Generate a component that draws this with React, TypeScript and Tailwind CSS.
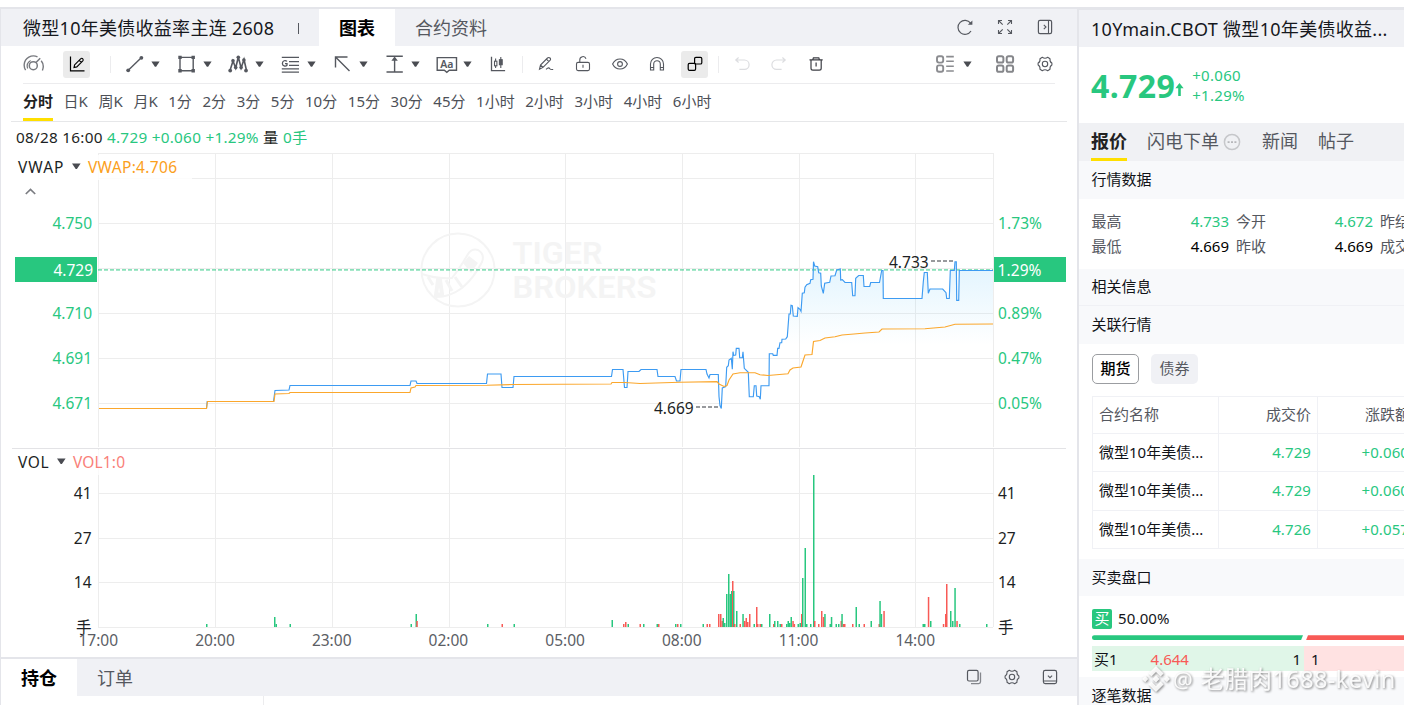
import React from "react";

const FONT = "font-['Noto_Sans','Noto_Sans_CJK_SC',sans-serif]";

/* ---------- icons ---------- */

type IconProps = { w?: number; className?: string; children: React.ReactNode };

function Ico({ w = 16, className = "", children }: IconProps) {
  return (
    <svg
      width={w}
      height={20}
      viewBox={`0 0 ${w} 20`}
      fill="none"
      stroke="currentColor"
      strokeWidth={1.1}
      className={`shrink-0 ${className}`}
    >
      {children}
    </svg>
  );
}

const Caret = ({ className = "" }: { className?: string }) => (
  <svg width="9" height="20" viewBox="0 0 9 20" className={`shrink-0 ${className}`}>
    <path d="M0.4 7.6h8.2L5.1 12.800h-1.200z" fill="#4a4c52" />
  </svg>
);

const Divider = ({ className = "" }: { className?: string }) => (
  <span className={`h-[17px] w-px shrink-0 bg-[#ececee] ${className}`} />
);

const Gear = ({ className = "" }: { className?: string }) => (
  <Ico className={className}>
    <path
      d="M5.300 3.300Q8 5.300 10.700 3.300L13 4.700Q12.600 8 14.900 9.100V10.900Q12.600 12 13 15.300L10.700 16.700Q8 14.700 5.300 16.700L3 15.300Q3.400 12 1.100 10.900V9.100Q3.400 8 3 4.700Z"
      strokeLinejoin="round"
    />
    <circle cx="8" cy="10" r="2.700" />
  </Ico>
);

const Gauge = () => (
  <Ico w={22} className="text-[#77797e]">
    <path d="M2.600 16.200A9.500 9.500 0 0 1 1.200 10.500a9.300 9.300 0 0 1 13.300-7.600M18.200 6.800c2.400 3 2.600 6.300 1.200 9.600" strokeWidth="1.400" />
    <path d="M4.600 14.500a6.800 6.800 0 0 1 3-8" strokeWidth="1.200" />
    <circle cx="10.300" cy="11.700" r="4" strokeWidth="1.500" />
    <path d="M13 8.600l4.200-4.400" strokeWidth="1.500" />
  </Ico>
);

/* ---------- left header ---------- */

function ChartHeader() {
  return (
    <div className="flex h-[37px] items-stretch bg-[#f0f1f5]">
      <div className="flex w-[318px] items-center pl-[22px] pt-[2px] text-[18px] tracking-[0.28px] text-[#16181d]">
        <span className="whitespace-pre">微型10年美债收益率主连 2608</span>
        <span className="ml-[24px] h-[11px] w-px bg-[#55585f]" />
      </div>
      <div className="flex w-[76px] items-center justify-center bg-white pt-[2px] text-[18px] font-bold text-black">图表</div>
      <div className="flex items-center pl-5 pt-[2px] text-[18px] text-[#55585f]">合约资料</div>
      <div className="ml-auto flex items-center pb-[2px] pr-[24px] text-[#55585f]">
        <Ico w={18}>
          <path d="M14.6 6.2A7 7 0 1 0 15 14" strokeWidth="1.2" />
          <path d="M16.4 3.6v4.2h-4.6z" fill="currentColor" stroke="none" />
        </Ico>
        <Ico className="ml-[23px]">
          <path d="M1.5 7V3.5H5M1.5 3.5l4.2 4.2M11 3.5h3.5V7M14.5 3.5l-4.2 4.2M1.5 13v3.5H5M1.5 16.5l4.2-4.2M14.5 13v3.5H11M14.5 16.5l-4.2-4.2" />
        </Ico>
        <Ico className="ml-[24px]">
          <rect x="1.4" y="3.4" width="13.2" height="13.2" rx="1.6" strokeWidth="1.2" />
          <path d="M11.5 3.5v13M6.8 7.8L9 10l-2.2 2.2" />
        </Ico>
      </div>
    </div>
  );
}

/* ---------- toolbar ---------- */

function Toolbar() {
  return (
    <div className="mx-[22px] flex h-[38px] w-[1032px] items-center border-b border-[#ececee] pb-px text-[#55585f]">
      <Gauge />
      <span className="ml-[18px] flex size-[27px] shrink-0 items-center justify-center rounded-[3px] bg-[#ebebeb] text-black">
        <Ico>
          <path d="M1.5 2.6v14.3h14" strokeWidth="1.2" />
          <path d="M5.6 10.8l6-6c.8-.7 1.6-.7 2.2 0s.6 1.4 0 2.1l-6 6-2.8.7zM10.2 6.3l2.1 2.1" />
        </Ico>
      </span>
      <Divider className="ml-[20px]" />
      <Ico w={18} className="ml-[15px]">
        <path d="M2 16.5L15.5 3.5" strokeWidth="1.4" />
        <circle cx="2.2" cy="16.3" r="1.9" fill="currentColor" stroke="none" />
        <circle cx="15.4" cy="3.8" r="1.9" fill="currentColor" stroke="none" />
      </Ico>
      <Caret className="ml-[7px]" />
      <Ico w={19} className="ml-[17px]">
        <path d="M3 3v14.2M16.2 3v14.2M2 3.4h15M2 16.8h15" strokeWidth="1.4" />
        <path d="M1.3 1.7h3.4v3.4H1.3zM14.5 1.7h3.4v3.4h-3.4zM1.3 15.1h3.4v3.4H1.3zM14.5 15.1h3.4v3.4h-3.4z" fill="currentColor" stroke="none" />
      </Ico>
      <Caret className="ml-[7px]" />
      <Ico w={20} className="ml-[16px]">
        <path d="M2 16.5L5 7l2.7 7L10.3 3l2.8 11L16 5.500l2.500 11" strokeWidth="1.600" />
        <g fill="currentColor" stroke="none">
          <circle cx="2.2" cy="16.6" r="1.9" />
          <circle cx="5" cy="6.7" r="1.8" />
          <circle cx="7.7" cy="13.6" r="1.8" />
          <circle cx="10.3" cy="3.2" r="1.8" />
          <circle cx="13.1" cy="13.6" r="1.8" />
          <circle cx="15.9" cy="6" r="1.8" />
          <circle cx="18" cy="16.6" r="1.9" />
        </g>
      </Ico>
      <Caret className="ml-[7px]" />
      <Ico w={19} className="ml-[17px]">
        <path d="M.8 3.4h17.2M8 7.6h10M8 11.3h10M.8 14.8h17.2M.8 18.2h17.2" strokeWidth="1.3" />
        <path d="M6 7.4c-1.5-1.5-4.6-.9-4.6 2 0 2.7 3.2 3.3 4.6 1.8V9.6H4" strokeWidth="1.3" />
      </Ico>
      <Caret className="ml-[7px]" />
      <Ico w={18} className="ml-[17px]">
        <path d="M2.5 13.5V3h12M2.5 3l14 14" strokeWidth="1.4" />
      </Ico>
      <Caret className="ml-[8px]" />
      <Ico w={19} className="ml-[17px]">
        <path d="M1.5 2.3h16.3M1.5 18h16.3M9.6 4v14" strokeWidth="1.4" />
        <path d="M9.6 2.6l3.2 4.2H6.4z" fill="currentColor" stroke="none" />
      </Ico>
      <Caret className="ml-[7px]" />
      <Ico w={22} className="ml-[16px]">
        <path d="M1.2 3.6h19.3v12.7h-7.2l-2.5 2-2.5-2H1.2z" strokeWidth="1.4" />
        <text x="10.9" y="14" textAnchor="middle" fontSize="10.500" fontWeight="600" fill="currentColor" stroke="none" fontFamily="Noto Sans">Aa</text>
      </Ico>
      <Caret className="ml-[5px]" />
      <Ico className="ml-[18px]">
        <path d="M1.5 2.8v13.8h13.6" strokeWidth="1.3" />
        <path d="M5.6 4.5V14M10.8 3v11" />
        <rect x="4.5" y="7.2" width="2.4" height="4.6" fill="white" />
        <rect x="9.4" y="5.7" width="2.8" height="5" fill="currentColor" />
      </Ico>
      <Divider className="ml-[16px]" />
      <Ico className="ml-[15px]">
        <path d="M1.5 15.2l1-4.2 7-7c.8-.8 1.8-.7 2.5 0s.8 1.6 0 2.4l-7 7-3.5 1.8zM8.4 5.1l2.5 2.5M2.5 11l2.5 2.4M8 15.3c2.4-2 3.2-1.6 3.8-.6.5.8 1.6 1 3.4.8" />
      </Ico>
      <Ico className="ml-[21px]">
        <rect x="1.5" y="8.4" width="13" height="8.2" rx="1.6" />
        <path d="M4.8 8.2V6a3.2 3.2 0 0 1 6.2-1.3M8 10.8v3" />
      </Ico>
      <Ico w={18} className="ml-[20px]">
        <path d="M1.6 10C3.3 6.500 6 5 9 5s5.700 1.500 7.400 5c-1.700 3.500-4.400 5-7.400 5s-5.700-1.500-7.400-5z" />
        <circle cx="9" cy="10" r="2.400" />
      </Ico>
      <Ico className="ml-[20px]">
        <path d="M1.500 16V10a6.500 6.500 0 0 1 13 0v6h-3.200v-6a3.300 3.300 0 0 0-6.600 0v6zM1.500 13.500h3.200M11.300 13.500h3.200" />
      </Ico>
      <span className="ml-[16px] flex size-[27px] shrink-0 items-center justify-center rounded-[3px] bg-[#ebebeb] text-black">
        <Ico>
          <rect x="1.200" y="9.400" width="7.400" height="7" rx="1.300" strokeWidth="1.200" />
          <rect x="7.600" y="3.400" width="7.200" height="6.600" rx="1.300" strokeWidth="1.200" />
        </Ico>
      </span>
      <Divider className="ml-[10px]" />
      <Ico className="ml-[15px] text-[#dcdde0]">
        <path d="M4.600 3.500L1.800 6l2.800 2.500M1.800 6h8.600a4.200 4.200 0 0 1 0 9.400H5.400" strokeWidth="1.200" />
      </Ico>
      <Ico className="ml-[21px] text-[#dcdde0]">
        <path d="M11.400 3.500L14.200 6l-2.800 2.500M14.200 6H5.600a4.200 4.200 0 0 0 0 9.400h5" strokeWidth="1.200" />
      </Ico>
      <Ico className="ml-[21px] text-[#3c3e44]">
        <path d="M1.500 5.800h13.200M4.800 5.600l.6-1.700h5.400l.6 1.700M3 6v8.200c0 1.300.7 1.900 1.900 1.900h6.400c1.200 0 1.900-.6 1.900-1.900V6M8.100 8.600v4" strokeWidth="1.200" />
      </Ico>
      <Ico w={20} className="ml-[111px] text-[#8b8c90]">
        <rect x="2" y="2.200" width="6.200" height="6.400" rx="2" strokeWidth="1.900" />
        <rect x="2" y="11.400" width="6.200" height="6.400" rx="2" strokeWidth="1.900" />
        <path d="M11.200 2.600h7.600M11.200 7.200h7.600M11.200 12.200h7.600M11.200 17h7.600" strokeWidth="1.600" />
      </Ico>
      <Caret className="ml-[8px]" />
      <Ico w={20} className="ml-[23px] text-[#85868a]">
        <rect x="2" y="2.200" width="6.400" height="6.400" rx="1.900" strokeWidth="2" />
        <rect x="11.700" y="2.200" width="6.400" height="6.400" rx="1.900" strokeWidth="2" />
        <rect x="2" y="11.400" width="6.400" height="6.400" rx="1.900" strokeWidth="2" />
        <rect x="11.700" y="11.400" width="6.400" height="6.400" rx="1.900" strokeWidth="2" />
      </Ico>
      <Gear className="ml-[22px]" />
    </div>
  );
}

const PERIODS = ["日K", "周K", "月K", "1分", "2分", "3分", "5分", "10分", "15分", "30分", "45分", "1小时", "2小时", "3小时", "4小时", "6小时"];

function Periods() {
  return (
    <div className="mx-[10px] flex h-[38px] items-stretch gap-[10.6px] border-b border-[#e6e7e9] pl-[12px] text-[15px] text-[#4d5057]">
      <span className="flex items-center border-b-[3px] border-[#ffdf00] pt-px font-bold text-[#222]">分时</span>
      {PERIODS.map((p) => (
        <span key={p} className="flex items-center whitespace-nowrap pb-[2px]">{p}</span>
      ))}
    </div>
  );
}

/* ---------- chart ---------- */

const PRICE: number[][] = [
  [99,408.500],[206.500,408.500],[207.200,401.500],[273.500,401.500],[275,390.500],[289,390],[290,385.500],[410,385.500],[411,381],[416,381],[417,383.500],
  [486.500,383.500],[487.500,374],[501,374],[502,387.500],[513,387.500],[514,376.500],[611.500,376.500],[612.500,369.500],[623,369.500],[624.500,387.500],
  [627,387.500],[628,371.500],[639,371.500],[641,369.500],[657,369.500],[658,376.500],[675,376.500],[676.500,381],[680,381],[681,369.500],[706,369.500],
  [707,374],[709,378],[710,374.500],[718.300,374.500],[719,396.500],[720,405.500],[721.300,408.500],[722.300,388],[725.700,386.700],[726.700,367.300],
  [728.300,365.700],[729,360],[731.300,358.300],[732.300,369.300],[733,351.700],[733.700,355.300],[735.700,355],[736.300,348.300],[739,348.300],
  [739.700,357.700],[742.300,357.700],[743,351.700],[743.700,360.700],[744.300,368.300],[748.300,372.300],[749.300,396.700],[753.300,396.700],
  [754.300,385.700],[756,385.700],[756.700,396],[759.300,396.700],[760.300,399.300],[761,385.700],[769,385.700],[769.300,353.700],[772.700,353.700],
  [773.300,355.300],[777,355.300],[777.700,348.300],[779,348.300],[780,342.700],[781.700,342.700],[782,339.300],[785.700,339],[787.300,336.700],
  [789,314],[790.300,314],[791,305.300],[792.300,305.700],[793.300,316],[797.300,316.300],[798,307.700],[800,309.300],[801,311.300],[802.300,293.300],
  [804.300,292.700],[805,287.300],[806.700,284.700],[810,283.300],[810.700,279.700],[813,279.300],[813.500,261.700],[814.700,266],[817.700,266.700],
  [818.700,272.700],[820.700,273.300],[821.300,286],[823.300,293.300],[824.700,283.300],[829.700,282.300],[831,276],[835,275.700],[836.700,270],
  [840.300,269],[840.700,280],[842.300,279.700],[845,282.500],[851.700,282.500],[852.700,295.700],[855,295.700],[855.700,278.300],[858.700,275.500],
  [863.300,275.500],[864,286.500],[869.700,286.500],[870.700,282.500],[879.500,282.500],[881.700,270.500],[883,270.500],[883.300,298.500],[922,298.500],
  [923.300,281.700],[924.300,272.500],[927.300,272.500],[928.300,293.300],[930,289],[942.700,289],[946,292.700],[946.700,298.500],[949.300,298.500],
  [950.300,270.500],[954.300,270.500],[955,261.700],[956.300,261.700],[956.700,300.300],[958.700,300.300],[959.300,270.500],[993,270.500],
];

const VWAP: number[][] = [
  [99,408.500],[206.500,408.500],[207.500,401.500],[274,401.500],[275,394],[289,393.500],[290,392.500],[410,392.500],[411,388],[415,387],[416,385.500],
  [487,385.300],[513,384.500],[611,384],[612,382.500],[625,382.500],[640,383.500],[680,382.300],[717,381.700],[719,384],[724,386.500],[727,385.500],
  [729,380],[733,374],[740,372.700],[755,372.700],[760,374.700],[768,375.500],[788,373.700],[790,370],[793,368],[801,367],[803,361],[805,355],
  [812,354.500],[813.500,341.500],[820,340.500],[825,338],[835,336.700],[842,335],[854,334],[865,333],[879,332],[882,329],[925,328.700],
  [945,327],[955,324.300],[993,324],
];

/* [x, height, isDown] */
const VOLUME: [number, number, number][] = [
  [206,3,0],[274,10,0],[275.500,3,0],[289.500,3,0],[410.500,3,0],[415.500,13,0],[416.300,6,1],[487,3,0],[501.500,3,1],[513.500,3,0],
  [611.500,7,0],[623,3,1],[625,5,1],[627.500,3,0],[639.500,3,1],[643,3,0],[656.500,3,0],[658,3,1],[675,3,0],[677,3,1],[680,3,0],
  [702.500,3,0],[706.500,3,1],[709,3,1],[718,13,1],[720,13,1],[721.500,6,1],[722.500,9,0],[724,4,0],[726,33,0],[728,53,0],[729.500,33,0],
  [731,36,0],[732,46,1],[733,36,0],[734,3,1],[736,16,0],[739.500,3,1],[742.300,13,0],[744,6,1],[745.500,9,1],[747,5,1],[749,13,1],[753.500,3,0],
  [756,20,1],[757,3,1],[759.500,3,1],[761,3,0],[769,13,0],[773,3,1],[774,6,0],[777,6,0],[779.500,3,0],[781,3,1],[786,3,0],[787.500,6,0],
  [789,4,0],[790.500,10,0],[792.300,6,1],[793.600,3,1],[797.500,3,0],[799.500,4,0],[801,13,1],[802,49,0],[804.500,79,0],[806,3,0],[810,3,0],
  [813,152,0],[814,6,1],[818,3,1],[821,16,1],[822.800,10,1],[824.200,13,0],[829.500,3,0],[830.800,10,0],[835.500,3,0],[838,3,0],[840.500,6,1],
  [841.300,13,0],[842.800,3,1],[844,3,1],[852,3,1],[855.500,20,0],[858.500,3,0],[863.500,3,1],[870.500,6,0],[878.500,3,1],[879.300,26,0],
  [880.700,13,0],[883.300,16,1],[922.500,3,0],[924,3,0],[927.800,30,1],[930,6,0],[942.800,3,1],[945,13,1],[946,43,1],[950,16,0],
  [952,6,0],[954.300,39,0],[956.300,6,1],[959,3,0],[986,3,0],
];

const GRID_X = [215.500, 332.500, 449.500, 565.500, 682.500, 799.500, 915.500];
const toPath = (pts: number[][]) => "M" + pts.map((p) => p.join(" ")).join("L");

const PRICE_AXIS = [
  { y: 229, l: "4.750", r: "1.73%" },
  { y: 319, l: "4.710", r: "0.89%" },
  { y: 364, l: "4.691", r: "0.47%" },
  { y: 409, l: "4.671", r: "0.05%" },
];
const VOL_AXIS = [
  { y: 499, l: "41" },
  { y: 544, l: "27" },
  { y: 588, l: "14" },
  { y: 633, l: "手" },
];
const TIMES = ["17:00", "20:00", "23:00", "02:00", "05:00", "08:00", "11:00", "14:00"];

function Chart() {
  return (
    <svg width="1076" height="504" viewBox="1 153 1076 504" className="block" fontSize="15.5">
      <defs>
        <linearGradient id="area" x1="0" y1="261" x2="0" y2="345" gradientUnits="userSpaceOnUse">
          <stop offset="0" stopColor="#29aef5" stopOpacity="0.14" />
          <stop offset="1" stopColor="#29aef5" stopOpacity="0" />
        </linearGradient>
      </defs>

      <g stroke="#ededed" shapeRendering="crispEdges">
        {[153.500, 178.500, 223.500, 268.500, 313.500, 358.500, 403.500, 493.500, 538.500, 582.500, 627.500].map((y) => (
          <path key={y} d={`M98 ${y}H993`} />
        ))}
        {[98.500, ...GRID_X, 993.500].map((x) => (
          <path key={x} d={`M${x} 153V447M${x} 449V627`} />
        ))}
      </g>
      <path d="M12 448.500H1066" stroke="#e3e3e6" shapeRendering="crispEdges" />
      <rect x="14" y="155" width="178" height="25" fill="#fff" fillOpacity="0.8" />
      <rect x="14" y="450" width="115" height="25" fill="#fff" fillOpacity="0.7" />

      <g fill="none" stroke="#f4f4f4" strokeWidth="2">
        <circle cx="458" cy="270" r="36.500" />
        <path d="M422 274Q436 279 452 278Q460 268 468 254Q472 248 478 250Q485 254 482 262Q474 278 462 288Q450 297 436 297" />
        <path d="M463 263L471 273L478 263L469 256Z" fill="#f4f4f4" stroke="none" />
        <path d="M438 280L436 295L442 294L440 280Z" strokeWidth="4" />
        <path d="M428 277L433 285M446 280L452 291M455 277L462 287" strokeWidth="3" />
      </g>
      <g fontFamily="Roboto" fontWeight="600" fontSize="31.500" fill="#f4f4f4">
        <text x="512.500" y="264" textLength="90" lengthAdjust="spacingAndGlyphs">TIGER</text>
        <text x="512.500" y="298" textLength="144" lengthAdjust="spacingAndGlyphs">BROKERS</text>
      </g>

      <path d={toPath(PRICE) + "V403L99 403Z"} fill="url(#area)" />
      <path d="M98 269.900H993" stroke="#28c77f" strokeOpacity="0.55" strokeWidth="1.700" strokeDasharray="4 2" />
      <path d={toPath(PRICE)} fill="none" stroke="#3d9bf2" strokeWidth="1.150" />
      <path d={toPath(VWAP)} fill="none" stroke="#fba72c" strokeWidth="1.150" />

      {VOLUME.map(([x, h, d], i) => (
        <rect key={i} x={x} y={627 - h} width="1.500" height={h} fill={d ? "#f85a56" : "#28c77f"} />
      ))}

      <g fill="#28c77f">
        {PRICE_AXIS.map((a) => (
          <React.Fragment key={a.l}>
            <text x="92" y={a.y} textAnchor="end">{a.l}</text>
            <text x="998" y={a.y} textLength="44" lengthAdjust="spacing">{a.r}</text>
          </React.Fragment>
        ))}
        <rect x="15" y="257" width="82" height="25" />
        <rect x="994" y="257" width="72" height="25" />
      </g>
      <text x="93" y="276" textAnchor="end" fill="#fff">4.729</text>
      <text x="997.500" y="276" fill="#fff" textLength="44" lengthAdjust="spacing">1.29%</text>
      <g fill="#1d1f24">
        {VOL_AXIS.map((a) => (
          <React.Fragment key={a.l}>
            <text x="91.500" y={a.y} textAnchor="end">{a.l}</text>
            <text x="998" y={a.y}>{a.l}</text>
          </React.Fragment>
        ))}
        <text x="18" y="173" textLength="45.500" lengthAdjust="spacing">VWAP</text>
        <text x="18" y="468" textLength="30.500" lengthAdjust="spacing">VOL</text>
        <text x="889" y="268">4.733</text>
        <text x="654" y="414">4.669</text>
      </g>
      <path d="M931 261H955M696 407H720" stroke="#77797e" strokeWidth="1.600" strokeDasharray="4 2" />
      <path d="M72 163.500h8.600l-3.700 5.400h-1.200zM57 458.500h8.600l-3.700 5.400h-1.200z" fill="#4a4c52" />
      <text x="88" y="173" fill="#fba01c" textLength="89" lengthAdjust="spacing">VWAP:4.706</text>
      <text x="73" y="468" fill="#f97f79" textLength="52" lengthAdjust="spacing">VOL1:0</text>
      <path d="M25.800 194L30.500 189.500L35.200 194" fill="none" stroke="#7b7d82" strokeWidth="1.700" />
      <g fill="#5b5e65" textAnchor="middle">
        {TIMES.map((t, i) => (
          <text key={t} x={98.300 + i * 116.700} y="646">{t}</text>
        ))}
      </g>
    </svg>
  );
}

function BottomTabs() {
  return (
    <div className="flex h-[48px] shrink-0 flex-col">
      <div className="flex h-[39px] items-stretch border-t-2 border-[#e4e5ea] bg-[#f0f1f5]">
        <div className="flex w-[76px] items-center justify-center bg-white pt-px text-[18px] font-bold text-black">持仓</div>
        <div className="flex items-center pl-5 pt-[2px] text-[18px] text-[#55585f]">订单</div>
        <div className="ml-auto flex items-center gap-[22px] pb-px pr-[19px] text-[#55585f]">
          <Ico>
            <rect x="1.500" y="3.400" width="10.600" height="10.600" rx="1.500" strokeWidth="1.200" />
            <path d="M14.500 5.500v9.300c0 1.200-.6 1.800-1.800 1.800H5" strokeWidth="1.300" strokeOpacity="0.700" />
          </Ico>
          <Gear />
          <Ico>
            <rect x="1.400" y="3.400" width="13.200" height="13.200" rx="1.800" strokeWidth="1.200" />
            <path d="M1.500 14h13M5.900 8.600L8 10.700l2.100-2.100" />
          </Ico>
        </div>
      </div>
      <div className="h-[9px] w-[263px] border-r border-[#ececee] bg-white" />
    </div>
  );
}

/* ---------- right panel ---------- */

const Section = ({ title, className }: { title: string; className: string }) => (
  <div className={`flex shrink-0 items-center bg-[#f8f9fb] pb-px pl-[12.5px] text-[15px] text-[#111318] ${className}`}>{title}</div>
);

const LINKED = [
  ["4.729", "+0.060"],
  ["4.729", "+0.060"],
  ["4.726", "+0.057"],
];

function QuotePanel() {
  return (
    <aside className="flex w-[325px] shrink-0 flex-col overflow-hidden">
      <div className="flex h-[37px] shrink-0 items-center whitespace-nowrap bg-[#f0f1f5] pl-[12px] pt-[2px] text-[18px] tracking-[0.3px] text-[#16181d]">
        10Ymain.CBOT 微型10年美债收益...
      </div>
      <div className="flex h-[76px] shrink-0 items-center bg-white pl-[12px] text-[#28c77f]">
        <span className="mt-px text-[32px] font-bold leading-none tracking-[0.4px]">4.729</span>
        <svg width="9" height="14" viewBox="0 0 9 14" className="mt-[9px]">
          <path d="M4.500 0L8.600 5.200H5.800V13H3.200V5.200H.4z" fill="#28c77f" />
        </svg>
        <span className="ml-[8px] flex flex-col pb-px text-[15px] leading-[20px] tracking-[0.3px]">
          <span>+0.060</span>
          <span>+1.29%</span>
        </span>
      </div>
      <div className="flex h-[38px] shrink-0 items-stretch bg-[#f0f1f4] pl-[12px] text-[18px] text-[#55585f]">
        <span className="flex items-center border-b-[3px] border-[#ffdf00] pt-[2px] font-bold text-[#222]">报价</span>
        <span className="ml-[20px] flex items-center pb-px">
          闪电下单
          <svg width="18" height="18" viewBox="0 0 18 18" className="ml-[4px]">
            <circle cx="9" cy="9" r="7.600" fill="none" stroke="#c6c7ca" strokeWidth="1.500" />
            <path d="M4.600 8.200h2v1.800h-2zM8 8.200h2v1.800H8zM11.400 8.200h2v1.800h-2z" fill="#b6b7ba" />
          </svg>
        </span>
        <span className="ml-[21px] flex items-center pb-px">新闻</span>
        <span className="ml-[20px] flex items-center pb-px">帖子</span>
      </div>
      <Section title="行情数据" className="h-[38px]" />
      <div className="grid h-[70px] w-[430px] shrink-0 grid-cols-[137.5px_7px_137px_7px_120px] content-center gap-y-[1px] pb-[2px] pl-[12.5px] text-[15px] leading-[24px] text-[#55585f]">
        <div className="flex justify-between"><span>最高</span><span className="text-[#28c77f]">4.733</span></div>
        <span />
        <div className="flex justify-between"><span>今开</span><span className="text-[#28c77f]">4.672</span></div>
        <span />
        <div>昨结</div>
        <div className="flex justify-between"><span>最低</span><span className="text-black">4.669</span></div>
        <span />
        <div className="flex justify-between"><span>昨收</span><span className="text-black">4.669</span></div>
        <span />
        <div>成交量</div>
      </div>
      <Section title="相关信息" className="h-[37px] border-b border-[#f0f1f5]" />
      <Section title="关联行情" className="h-[38px]" />
      <div className="flex h-[52px] shrink-0 gap-[12px] pl-[13px] pt-[10px] text-[15px]">
        <span className="flex h-[30px] w-[47px] items-center justify-center rounded-[5px] border border-[#9b9da1] pb-[2px] font-medium text-black">期货</span>
        <span className="flex h-[30px] w-[47px] items-center justify-center rounded-[5px] bg-[#f0f1f5] pb-px text-[#55585f]">债券</span>
      </div>
      <div className="ml-[13px] w-[360px] shrink-0 border-l border-t border-[#f0f1f5] text-[15px]">
        <div className="grid h-[37px] grid-cols-[126px_99px_134px] border-b border-[#f0f1f5] text-[#55585f]">
          <span className="flex items-center border-r border-[#f0f1f5] pb-px pl-[6px]">合约名称</span>
          <span className="flex items-center justify-end border-r border-[#f0f1f5] pb-px pr-[6px]">成交价</span>
          <span className="flex items-center pb-px pl-[47px]">涨跌额</span>
        </div>
        {LINKED.map(([price, change], i) => (
          <div key={i} className="grid h-[38.400px] grid-cols-[126px_99px_134px] border-b border-[#f0f1f5] text-[#28c77f]">
            <span className="flex items-center border-r border-[#f0f1f5] pb-px pl-[6px] text-[#111318]">微型10年美债...</span>
            <span className="flex items-center justify-end border-r border-[#f0f1f5] pb-px pr-[6px] tracking-[0.1px]">{price}</span>
            <span className="flex items-center pb-px pl-[43.500px] tracking-[0.1px]">{change}</span>
          </div>
        ))}
      </div>
      <Section title="买卖盘口" className="mt-[10px] h-[37px]" />
      <div className="flex h-[39px] shrink-0 items-center pl-[13px] pt-[7px] text-[15px] text-[#111318]">
        <span className="mr-[6px] flex size-[20px] items-center justify-center rounded-[2px] bg-[#28c77f] pb-px leading-none text-white">买</span>
        <span className="pb-px tracking-[0.15px]">50.00%</span>
      </div>
      <div className="ml-[13px] flex h-[5px] w-[422px] shrink-0 gap-[2px]">
        <span className="w-[211px] rounded-l-full bg-[#28c77f] [clip-path:polygon(0_0,100%_0,calc(100%-2px)_100%,0_100%)]" />
        <span className="w-[209px] bg-[#f85a56] [clip-path:polygon(3px_0,100%_0,100%_100%,1px_100%)]" />
      </div>
      <div className="ml-[13px] mt-[6px] flex h-[25px] w-[420px] shrink-0 text-[15px] leading-[20px] text-[#111318]">
        <div className="flex w-[212px] items-center bg-[#e0f6e8] pl-[2px]">
          <span>买1</span>
          <span className="ml-[33px] pt-px text-[#f85a56]">4.644</span>
          <span className="ml-auto pr-[3px] pt-px">1</span>
        </div>
        <div className="flex flex-1 items-center bg-[#ffe2e2] pl-[7px] pt-px">1</div>
      </div>
      <Section title="逐笔数据" className="mt-[6px] h-[38px]" />
    </aside>
  );
}

function Watermark() {
  return (
    <div className="absolute left-[1141px] top-[662px] flex items-center whitespace-nowrap text-[23.500px] leading-[34px] text-white/90 [filter:drop-shadow(1px_1px_1px_rgba(0,0,0,0.5))]">
      <svg width="30" height="30" viewBox="0 0 30 30" fill="currentColor">
        <path d="M15 2l7.600 7.600-3 3L15 8l-4.600 4.600-3-3zM4.200 11.800L7.200 15l-3 3.200L1 15zM25.800 11.800L29 15l-3.200 3.200-3-3.200zM15 11.500l3.500 3.500-3.500 3.500-3.500-3.500zM7.400 20.400l3-3L15 22l4.600-4.600 3 3L15 28z" />
      </svg>
      <span className="ml-[2px] text-[22px]">@</span>
      <span className="ml-[8px] tracking-[0.4px]">老腊肉1688-kevin</span>
    </div>
  );
}

export default function App() {
  return (
    <div className={`relative flex h-[705px] w-[1404px] flex-col overflow-hidden bg-white pt-[7px] ${FONT}`}>
      <div className="flex min-h-0 flex-1">
        <main className="flex w-[1077px] shrink-0 flex-col border-l border-t-2 border-l-[#e4e5ea] border-t-[#e4e5ea]">
          <ChartHeader />
          <Toolbar />
          <Periods />
          <div className="flex h-[31px] shrink-0 items-center whitespace-pre pl-[15px] text-[15.300px] tracking-[0.270px] text-[#1d1f24]">
            08/28 16:00 <span className="text-[#28c77f]">4.729 +0.060 +1.29% </span>量 <span className="text-[#28c77f]">0手</span>
          </div>
          <Chart />
          <BottomTabs />
        </main>
        <div className="flex border-l-2 border-t-[3px] border-[#e4e5ea]">
          <QuotePanel />
        </div>
      </div>
      <Watermark />
    </div>
  );
}
